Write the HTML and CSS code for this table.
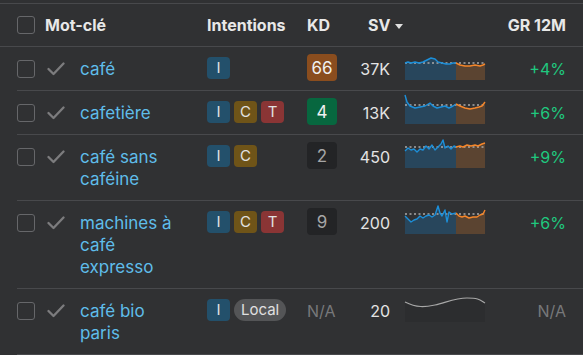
FILE: index.html
```html
<!DOCTYPE html>
<html lang="fr">
<head>
<meta charset="utf-8">
<link rel="stylesheet" href="styles.css">
</head>
<body>
<div class="table">
  <div class="row head">
    <div class="c-box"><span class="box"></span></div>
    <div class="c-kw-head">Mot-clé</div>
    <div class="c-int">Intentions</div>
    <div class="c-kd">KD</div>
    <div class="c-sv-head">SV<span class="sort"></span></div>
    <div class="c-spark"></div>
    <div class="c-gr">GR 12M</div>
  </div>

  <div class="row">
    <div class="c-box"><span class="box"></span></div>
    <div class="c-chk"><svg class="chk" viewBox="0 0 18 14"><polyline points="1.5,7 6.5,12 16.5,1.5"/></svg></div>
    <div class="c-kw">café</div>
    <div class="c-int"><span class="tag t-i">I</span></div>
    <div class="c-kd"><span class="kd kd-hard">66</span></div>
    <div class="c-sv">37K</div>
    <div class="c-spark">
      <svg class="spark" viewBox="0 0 80 30">
        <path class="fb" d="M0,13 L3,12 6,13 10,12 14,13 18,12 22,10 26,8 30,9 33,12 37,13 41,14 45,14 48,13 51,13 L51,30 L0,30Z"/>
        <path class="fo" d="M51,13 L55,15 60,16 65,16 70,15 75,16 78,15 80,14 L80,30 L51,30Z"/>
        <line class="dot" x1="0" y1="13" x2="80" y2="13"/>
        <polyline class="lb" points="0,13 3,12 6,13 10,12 14,13 18,12 22,10 26,8 30,9 33,12 37,13 41,14 45,14 48,13 51,13"/>
        <polyline class="lo" points="51,13 55,15 60,16 65,16 70,15 75,16 78,15 80,14"/>
      </svg>
    </div>
    <div class="c-gr up">+4%</div>
  </div>

  <div class="row">
    <div class="c-box"><span class="box"></span></div>
    <div class="c-chk"><svg class="chk" viewBox="0 0 18 14"><polyline points="1.5,7 6.5,12 16.5,1.5"/></svg></div>
    <div class="c-kw">cafetière</div>
    <div class="c-int"><span class="tag t-i">I</span><span class="tag t-c">C</span><span class="tag t-t">T</span></div>
    <div class="c-kd"><span class="kd kd-easy">4</span></div>
    <div class="c-sv">13K</div>
    <div class="c-spark">
      <svg class="spark" viewBox="0 0 80 30">
        <path class="fb" d="M0,1 L2,8 5,12 10,14 15,13 20,12 25,9 28,12 32,14 36,13 40,12 44,14 48,12 51,10 L51,30 L0,30Z"/>
        <path class="fo" d="M51,10 L55,12 60,14 65,15 70,14 74,13 77,12 80,8 L80,30 L51,30Z"/>
        <line class="dot" x1="0" y1="11" x2="80" y2="11"/>
        <polyline class="lb" points="0,1 2,8 5,12 10,14 15,13 20,12 25,9 28,12 32,14 36,13 40,12 44,14 48,12 51,10"/>
        <polyline class="lo" points="51,10 55,12 60,14 65,15 70,14 74,13 77,12 80,8"/>
      </svg>
    </div>
    <div class="c-gr up">+6%</div>
  </div>

  <div class="row">
    <div class="c-box"><span class="box"></span></div>
    <div class="c-chk"><svg class="chk" viewBox="0 0 18 14"><polyline points="1.5,7 6.5,12 16.5,1.5"/></svg></div>
    <div class="c-kw">café sans caféine</div>
    <div class="c-int"><span class="tag t-i">I</span><span class="tag t-c">C</span></div>
    <div class="c-kd"><span class="kd kd-min">2</span></div>
    <div class="c-sv">450</div>
    <div class="c-spark">
      <svg class="spark" viewBox="0 0 80 30">
        <path class="fb" d="M0,13 L3,10 6,12 9,11 12,14 15,11 18,12 21,8 24,11 27,7 30,12 33,9 36,6 38,2 40,10 43,8 46,11 49,8 51,9 L51,30 L0,30Z"/>
        <path class="fo" d="M51,9 L55,8 58,9 62,7 66,8 70,7 73,8 77,6 80,5 L80,30 L51,30Z"/>
        <line class="dot" x1="0" y1="9" x2="80" y2="9"/>
        <polyline class="lb" points="0,13 3,10 6,12 9,11 12,14 15,11 18,12 21,8 24,11 27,7 30,12 33,9 36,6 38,2 40,10 43,8 46,11 49,8 51,9"/>
        <polyline class="lo" points="51,9 55,8 58,9 62,7 66,8 70,7 73,8 77,6 80,5"/>
      </svg>
    </div>
    <div class="c-gr up">+9%</div>
  </div>

  <div class="row">
    <div class="c-box"><span class="box"></span></div>
    <div class="c-chk"><svg class="chk" viewBox="0 0 18 14"><polyline points="1.5,7 6.5,12 16.5,1.5"/></svg></div>
    <div class="c-kw">machines à café expresso</div>
    <div class="c-int"><span class="tag t-i">I</span><span class="tag t-c">C</span><span class="tag t-t">T</span></div>
    <div class="c-kd"><span class="kd kd-min">9</span></div>
    <div class="c-sv">200</div>
    <div class="c-spark">
      <svg class="spark" viewBox="0 0 80 30">
        <path class="fb" d="M0,12 L3,15 6,18 9,16 12,15 15,12 18,14 21,12 24,11 27,13 30,11 33,2 35,9 37,12 40,6 42,18 44,8 47,10 51,9 L51,30 L0,30Z"/>
        <path class="fo" d="M51,9 L54,12 57,13 60,12 64,14 68,13 72,13 75,11 78,10 80,6 L80,30 L51,30Z"/>
        <line class="dot" x1="0" y1="10" x2="80" y2="10"/>
        <polyline class="lb" points="0,12 3,15 6,18 9,16 12,15 15,12 18,14 21,12 24,11 27,13 30,11 33,2 35,9 37,12 40,6 42,18 44,8 47,10 51,9"/>
        <polyline class="lo" points="51,9 54,12 57,13 60,12 64,14 68,13 72,13 75,11 78,10 80,6"/>
      </svg>
    </div>
    <div class="c-gr up">+6%</div>
  </div>

  <div class="row">
    <div class="c-box"><span class="box"></span></div>
    <div class="c-chk"><svg class="chk" viewBox="0 0 18 14"><polyline points="1.5,7 6.5,12 16.5,1.5"/></svg></div>
    <div class="c-kw">café bio paris</div>
    <div class="c-int"><span class="tag t-i">I</span><span class="pill">Local</span></div>
    <div class="c-kd"><span class="na">N/A</span></div>
    <div class="c-sv">20</div>
    <div class="c-spark">
      <svg class="spark" viewBox="0 0 80 30">
        <path class="fg" d="M0,10 C12,16 20,15 30,13 S50,6 62,6 S75,8 80,11 L80,30 L0,30Z"/>
        <path class="lg" d="M0,10 C12,16 20,15 30,13 S50,6 62,6 S75,8 80,11"/>
      </svg>
    </div>
    <div class="c-gr na">N/A</div>
  </div>
</div>
</body>
</html>
```

FILE: styles.css
```css
html, body {
  margin: 0;
  padding: 0;
  background: #303133;
  font-family: Inter, "Noto Sans", sans-serif;
  font-size: 16px;
  color: #e4e4e4;
}

.table {
  margin-top: 3px;
  border-top: 1px solid #48494c;
  overflow: hidden;
}

.row {
  display: grid;
  grid-template-columns: 30px 33px 127px 100px 40px 43px 95px 81px;
  grid-auto-rows: auto;
  align-items: start;
  margin-left: 17px;
  padding: 11px 0 10px;
  line-height: 22px;
  border-bottom: 1px solid #48494c;
}

.row > div {
  min-height: 22px;
}

.row.head {
  margin-left: 0;
  padding: 10px 0 10px 17px;
  font-weight: 700;
  color: #e8e8e8;
}

.c-box {
  display: flex;
  align-items: center;
  height: 22px;
}

.box {
  width: 16px;
  height: 16px;
  border: 1px solid #66676a;
  border-radius: 3px;
}

.c-kw-head {
  grid-column: 2 / 4;
  margin-left: -2px;
}

.c-chk {
  display: flex;
  align-items: center;
  height: 22px;
}

.chk {
  width: 18px;
  height: 14px;
  fill: none;
  stroke: #7c7c7e;
  stroke-width: 2.3;
  stroke-linecap: round;
  stroke-linejoin: round;
}

.c-kw {
  color: #5fbdea;
  font-size: 17px;
  max-width: 100px;
}

.c-int {
  display: flex;
  gap: 4px;
  height: 22px;
}

.tag {
  display: flex;
  align-items: center;
  justify-content: center;
  width: 23px;
  height: 22px;
  margin-top: -1px;
  border-radius: 4px;
  font-size: 15px;
  color: #e2e2e2;
}

.t-i { background: #23506b; }
.t-c { background: #6f5418; }
.t-t { background: #8a3535; }

.pill {
  display: flex;
  align-items: center;
  height: 22px;
  margin-top: -1px;
  padding: 0 7px;
  border-radius: 11px;
  background: #545557;
  color: #e0e0e0;
  font-size: 15px;
}

.c-kd {
  display: flex;
  height: 22px;
}

.kd {
  display: flex;
  align-items: center;
  justify-content: center;
  flex: none;
  width: 30px;
  height: 27px;
  margin-top: -4px;
  border-radius: 4px;
  font-size: 17px;
}

.kd-hard { background: #8a4d1e; color: #f0f0f0; }
.kd-easy { background: #07673f; color: #f0f0f0; }
.kd-min { background: #232426; color: #a6a6a6; }

.na { color: #77787a; }

.c-sv {
  text-align: right;
}

.c-sv-head {
  padding-left: 21px;
  display: flex;
  align-items: center;
  white-space: nowrap;
}

.sort {
  display: inline-block;
  margin-left: 5px;
  margin-top: 2px;
  width: 0;
  height: 0;
  border-left: 4.5px solid transparent;
  border-right: 4.5px solid transparent;
  border-top: 5px solid #e0e0e0;
}

.c-spark {
  display: flex;
  height: 22px;
  padding-left: 15px;
}

.spark {
  display: block;
  flex: none;
  width: 80px;
  height: 30px;
  margin-top: -8px;
  overflow: visible;
}

.fb { fill: #28465c; }
.fo { fill: #5b4431; }
.fg { fill: #2c2d2f; }
.dot {
  stroke: #a9a9a9;
  stroke-width: 1.3;
  stroke-dasharray: 2 2.5;
}
.lb, .lo, .lg {
  fill: none;
  stroke-width: 1.4;
  stroke-linejoin: round;
}
.lb { stroke: #1c8fd9; }
.lo { stroke: #f5862a; }
.lg { stroke: #a8a8a8; stroke-width: 1.2; }

.c-gr {
  text-align: right;
}

.up { color: #1fc97f; }
.c-gr.na { color: #77787a; }
```
